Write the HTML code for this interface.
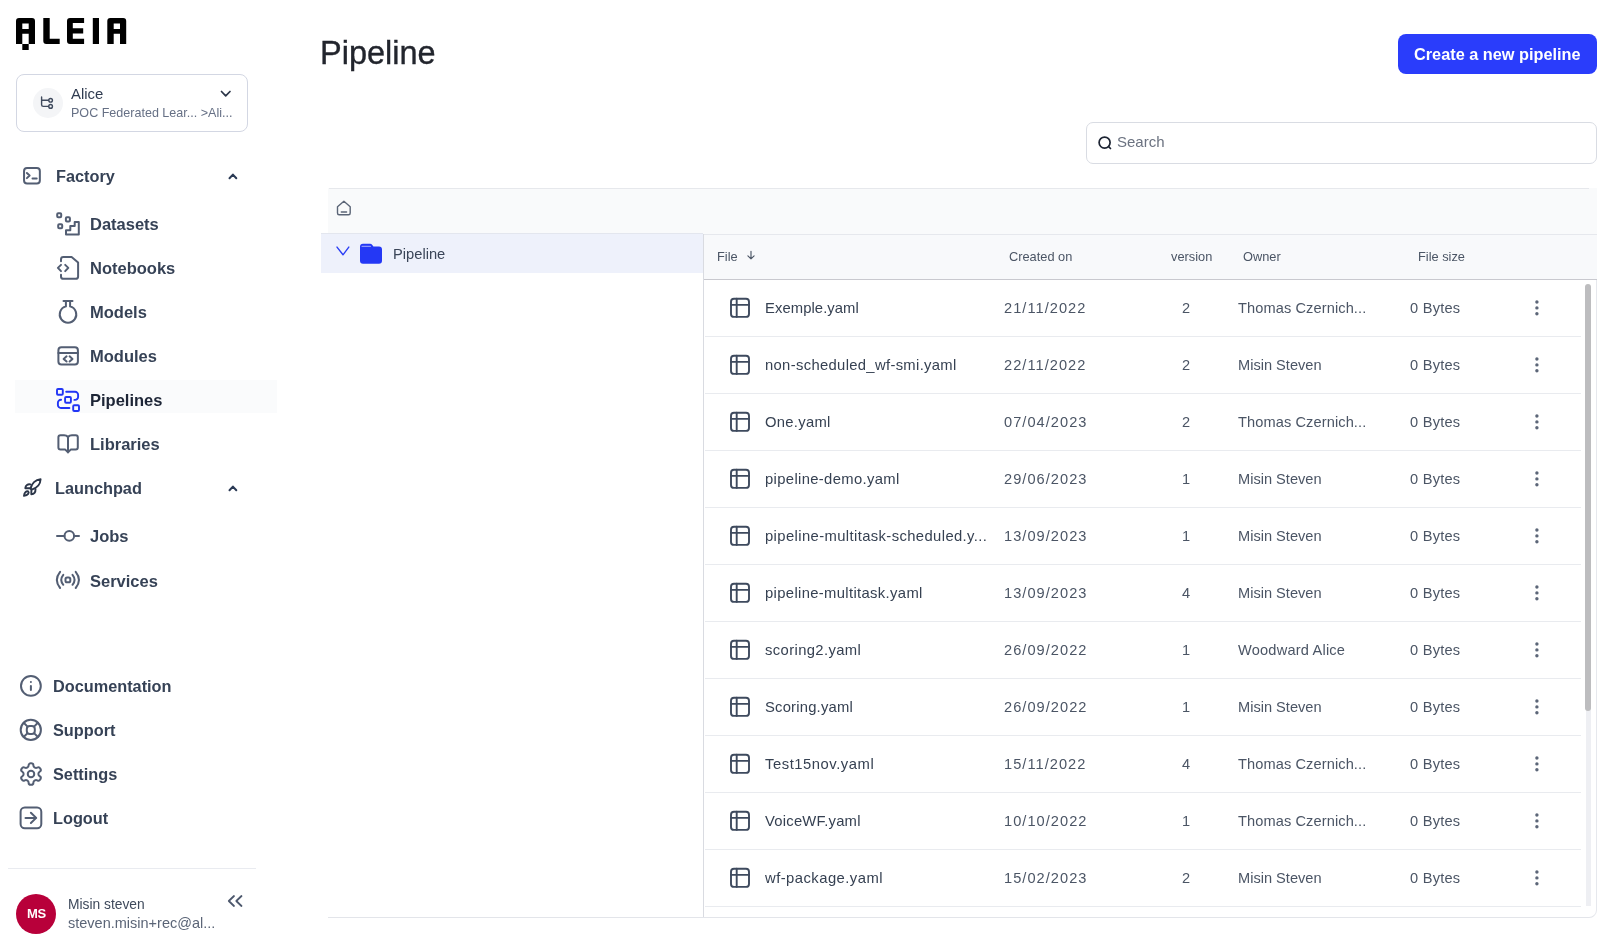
<!DOCTYPE html>
<html><head><meta charset="utf-8">
<style>
*{box-sizing:border-box;margin:0;padding:0}
html,body{width:1622px;height:945px;overflow:hidden;background:#fff;font-family:"Liberation Sans",sans-serif;color:#344054}
.a{position:absolute}
.t{position:absolute;white-space:nowrap;line-height:1;will-change:transform}
svg{position:absolute;overflow:visible}
.nav{font-weight:700;color:#364256}
.ico{fill:none;stroke:#535e73;stroke-width:2;stroke-linecap:round;stroke-linejoin:round}
.icb{fill:none;stroke:#2236f5;stroke-width:1.9;stroke-linecap:round;stroke-linejoin:round}
.hd{color:#4b5565}
.fn{color:#364152}
.dt{color:#4b5565;letter-spacing:1.05px}
.ow{color:#4b5565}
</style></head><body>
<svg style="left:16px;top:17.8px" width="112" height="33" viewBox="0 0 112 33">
<g fill="#000">
<path d="M0 3 Q0 0 3 0 L16 0 Q19 0 19 3 L19 26 L12.7 26 L12.7 15.8 L6.3 15.8 L6.3 26 L0 26 Z M6.3 5.6 L6.3 11 L12.7 11 L12.7 5.6 Z" fill-rule="evenodd"/>
<rect x="6.3" y="26" width="6.4" height="6"/>
<path d="M27.3 0 L33.7 0 L33.7 20.8 L43.7 20.8 L43.7 26 L30.3 26 Q27.3 26 27.3 23 Z"/>
<path d="M54 0 L68.1 0 L68.1 5.1 L56.8 5.1 L56.8 10.2 L67.2 10.2 L67.2 15.6 L56.8 15.6 L56.8 20.8 L68.1 20.8 L68.1 26 L54 26 Q51 26 51 23 L51 3 Q51 0 54 0 Z"/>
<rect x="76.8" y="0" width="6.2" height="26"/>
<path d="M91.3 3 Q91.3 0 94.3 0 L107.2 0 Q110.2 0 110.2 3 L110.2 26 L104 26 L104 15.8 L97.7 15.8 L97.7 26 L91.3 26 Z M97.7 5.6 L97.7 11 L104 11 L104 5.6 Z" fill-rule="evenodd"/>
</g></svg>
<div class="a" style="left:16px;top:74px;width:232px;height:58px;border:1px solid #d3d7e3;border-radius:8px"></div>
<div class="a" style="left:33px;top:88px;width:30px;height:30px;border-radius:50%;background:#f4f5f7"></div>
<svg class="ico" style="left:30px;top:86px;stroke:#404b5e;stroke-width:1.4" width="36" height="36" viewBox="0 0 36 36"><path d="M11.6 11 V18.7 Q11.6 20.4 13.3 20.4 H18.5 M11.6 14.3 H18.5"/><circle cx="20.6" cy="14.3" r="1.85"/><circle cx="20.6" cy="20.4" r="1.85"/></svg>
<div class="t fn" style="left:71px;top:87.00px;font-size:14.9px;color:#303c51">Alice</div>
<div class="t " style="left:70.8px;top:107.00px;font-size:12.55px;color:#667085">POC Federated Lear... &gt;Ali...</div>
<svg class="ico" style="left:216px;top:85px;stroke:#2b3548;stroke-width:1.7" style="left:216px;top:85px" width="20" height="20" viewBox="0 0 20 20"><path d="M5.5 6.5 L9.7 10.9 L14 6.5"/></svg>
<div class="a" style="left:15px;top:380px;width:262px;height:33px;background:#fafbfc"></div>
<svg class="ico" style="left:16px;top:160px" width="32" height="32" viewBox="0 0 32 32"><rect x="8.05" y="7.95" width="15.8" height="15.5" rx="3"/><path d="M10.9 13 L13.6 15.5 L10.9 18.1 M16.5 18.6 H20.7"/></svg>
<div class="t nav" style="left:55.5px;top:168.00px;font-size:16.3px;">Factory</div>
<svg class="ico" style="left:216px;top:160px;stroke:#2b3a55" style="left:216px;top:160px" width="32" height="32" viewBox="0 0 32 32"><path d="M13.5 18.3 L16.9 14.6 L20.3 18.3"/></svg>
<svg class="ico" style="left:52px;top:208px" width="32" height="32" viewBox="0 0 32 32"><rect x="5.2" y="5.2" width="4" height="4" rx="1"/><rect x="13.9" y="9.3" width="4" height="4.3" rx="1"/><rect x="6.2" y="16.2" width="4" height="4" rx="1"/><path d="M14 22.3 H18.3 V18 H22.7 V14 H26.8 V26.6 H14 Z"/></svg>
<div class="t nav" style="left:89.8px;top:216.00px;font-size:16.5px;">Datasets</div>
<svg class="ico" style="left:52px;top:252px" width="32" height="32" viewBox="0 0 32 32"><path d="M9 9.3 V7.5 Q9 5.1 11.4 5.1 H19.6 L26.1 10.5 V24.4 Q26.1 26.8 23.7 26.8 H11.4 Q9 26.8 9 24.4 V22.7"/><path d="M9 12.9 L5.9 15.9 L9 19.1 M13.2 12.9 L16.3 15.9 L13.2 19.1"/></svg>
<div class="t nav" style="left:89.8px;top:260.00px;font-size:16.5px;">Notebooks</div>
<svg class="ico" style="left:52px;top:296px" width="32" height="32" viewBox="0 0 32 32"><path d="M11.5 4.9 H20.5 M13.9 4.9 V10.4 A8.3 8.3 0 1 0 18.1 10.4 V4.9"/></svg>
<div class="t nav" style="left:89.8px;top:304.00px;font-size:16.5px;">Models</div>
<svg class="ico" style="left:52px;top:340px" width="32" height="32" viewBox="0 0 32 32"><rect x="6.4" y="7.3" width="19.5" height="17.3" rx="3"/><path d="M6.4 12.9 H25.9 M14.6 16.3 L11.6 18.9 L14.6 21.5 M17.6 16.3 L20.5 18.9 L17.6 21.5"/></svg>
<div class="t nav" style="left:89.8px;top:348.00px;font-size:16.5px;">Modules</div>
<svg class="icb" style="left:52px;top:384px" width="32" height="32" viewBox="0 0 32 32"><rect x="5" y="5" width="5.8" height="5.8" rx="1"/><rect x="13.1" y="13" width="5.8" height="5.8" rx="1"/><rect x="21.2" y="21.2" width="5.8" height="5.8" rx="1"/><path d="M14.2 7.8 H23 A3 3 0 0 1 26.1 10.8 V12.9 A3 3 0 0 1 23 15.9 H22.4 M9.1 15.8 H9 A3 3 0 0 0 5.9 18.8 V21 A3 3 0 0 0 9 24 H17.4"/></svg>
<div class="t nav" style="left:89.8px;top:392.00px;font-size:16.5px;color:#1d2536">Pipelines</div>
<svg class="ico" style="left:52px;top:428px" width="32" height="32" viewBox="0 0 32 32"><path d="M16 9 Q14.5 7.2 12 7.2 H8.5 Q6.4 7.2 6.4 9.3 V19.6 Q6.4 21.6 8.5 21.6 H13.3 L16 24.4 L18.7 21.6 H23.7 Q25.8 21.6 25.8 19.6 V9.3 Q25.8 7.2 23.7 7.2 H20 Q17.5 7.2 16 9 Z M16 9 V24.4"/></svg>
<div class="t nav" style="left:89.8px;top:436.00px;font-size:16.5px;">Libraries</div>
<svg class="ico" style="left:16px;top:472px;stroke:#2b3548;stroke-width:1.9" style="left:16px;top:472px" width="32" height="32" viewBox="0 0 32 32"><path d="M14.5 16.8 C15.5 11.5 19.5 7.6 24.6 7.3 C24.3 12.5 20.5 16.3 15.6 17.6 Z"/><path d="M14.3 12.4 C11.8 11.9 9.6 13.3 9.3 16.2 L13.8 16.3 M19.5 17.3 C19.6 20.3 18 22.1 15.3 22.3 L15.4 17.9 M8 23.8 C8.3 20.7 10.2 18.8 12.2 19.4 C13.4 20.6 12.3 23.3 8 23.8 Z"/></svg>
<div class="t nav" style="left:55.4px;top:480.00px;font-size:16.3px;">Launchpad</div>
<svg class="ico" style="left:216px;top:472px;stroke:#2b3a55" style="left:216px;top:472px" width="32" height="32" viewBox="0 0 32 32"><path d="M13.5 18.3 L16.9 14.6 L20.3 18.3"/></svg>
<svg class="ico" style="left:52px;top:520px" width="32" height="32" viewBox="0 0 32 32"><path d="M5 15.9 H12.5 M22.1 15.9 H27"/><circle cx="17.3" cy="15.9" r="4.8"/></svg>
<div class="t nav" style="left:89.8px;top:528.00px;font-size:16.5px;">Jobs</div>
<svg class="ico" style="left:52px;top:564px" width="32" height="32" viewBox="0 0 32 32"><rect x="13.5" y="13.5" width="4.8" height="4.8" rx="1.6"/><path d="M11.3 10.8 Q7.2 15.8 11.3 20.8 M20.5 10.8 Q24.6 15.8 20.5 20.8 M8.1 7.8 Q1.6 15.9 8.1 24 M23.7 7.8 Q30.2 15.9 23.7 24"/></svg>
<div class="t nav" style="left:89.8px;top:573.00px;font-size:16.5px;">Services</div>
<svg class="ico" style="left:14px;top:670px" width="32" height="32" viewBox="0 0 32 32"><circle cx="16.9" cy="15.9" r="9.9"/><path d="M16.9 15.9 V20 M16.9 11.9 H16.91"/></svg>
<div class="t nav" style="left:53px;top:678.00px;font-size:16.3px;">Documentation</div>
<svg class="ico" style="left:14px;top:714px" width="32" height="32" viewBox="0 0 32 32"><circle cx="16.8" cy="15.9" r="10.1"/><rect x="12.8" y="11.9" width="8" height="8" rx="3"/><path d="M9.7 8.8 L13.3 12.4 M20.3 12.4 L23.9 8.8 M20.3 19.4 L23.9 23 M13.3 19.4 L9.7 23"/></svg>
<div class="t nav" style="left:53px;top:722.00px;font-size:16.3px;">Support</div>
<svg class="ico" style="left:18.9px;top:761.9px;stroke-width:1.85" style="left:18.9px;top:761.9px" width="24" height="24" viewBox="0 0 24 24"><g transform="translate(12 12) scale(1.08) translate(-12 -12)"><path d="M12.22 2h-.44a2 2 0 0 0-2 2v.18a2 2 0 0 1-1 1.73l-.43.25a2 2 0 0 1-2 0l-.15-.08a2 2 0 0 0-2.73.73l-.22.38a2 2 0 0 0 .73 2.73l.15.1a2 2 0 0 1 1 1.72v.51a2 2 0 0 1-1 1.74l-.15.09a2 2 0 0 0-.73 2.73l.22.38a2 2 0 0 0 2.73.73l.15-.08a2 2 0 0 1 2 0l.43.25a2 2 0 0 1 1 1.73V20a2 2 0 0 0 2 2h.44a2 2 0 0 0 2-2v-.18a2 2 0 0 1 1-1.73l.43-.25a2 2 0 0 1 2 0l.15.08a2 2 0 0 0 2.73-.73l.22-.39a2 2 0 0 0-.73-2.73l-.15-.08a2 2 0 0 1-1-1.74v-.5a2 2 0 0 1 1-1.74l.15-.09a2 2 0 0 0 .73-2.73l-.22-.38a2 2 0 0 0-2.73-.73l-.15.08a2 2 0 0 1-2 0l-.43-.25a2 2 0 0 1-1-1.73V4a2 2 0 0 0-2-2z"/><circle cx="12" cy="12" r="3"/></g></svg>
<div class="t nav" style="left:53px;top:766.00px;font-size:16.3px;">Settings</div>
<svg class="ico" style="left:14px;top:802px" width="32" height="32" viewBox="0 0 32 32"><rect x="6.6" y="5.6" width="20.7" height="20.7" rx="4.2"/><path d="M11.5 15.9 H22.2 M16.9 10.8 L22.2 15.9 L16.9 21"/></svg>
<div class="t nav" style="left:53px;top:810.00px;font-size:16.3px;">Logout</div>
<div class="a" style="left:8px;top:868px;width:248px;height:1px;background:#e9ebf0"></div>
<div class="a" style="left:16px;top:894px;width:40px;height:40px;border-radius:50%;background:#b8003a"></div>
<div class="t " style="left:26.6px;top:907.00px;font-size:13px;font-weight:700;color:#fff;letter-spacing:-0.3px">MS</div>
<div class="t " style="left:68px;top:898.00px;font-size:13.8px;color:#3f4a5c">Misin steven</div>
<div class="t " style="left:68px;top:916.00px;font-size:14.5px;color:#5b6577">steven.misin+rec@al...</div>
<svg class="ico" style="left:220px;top:888px;stroke:#4d586d;stroke-width:1.8" style="left:220px;top:888px" width="28" height="28" viewBox="0 0 28 28"><path d="M14 8 L8.8 13 L14 18 M21.5 8 L16.3 13 L21.5 18"/></svg>
<div class="t " style="left:320px;top:37.00px;font-size:32.5px;color:#22252d;-webkit-text-stroke:0.35px #22252d">Pipeline</div>
<div class="a" style="left:1398px;top:34px;width:199px;height:40px;border-radius:8px;background:#2a3dfb"></div>
<div class="t " style="left:1414px;top:46.00px;font-size:16.3px;font-weight:700;color:#fff">Create a new pipeline</div>
<div class="a" style="left:1086px;top:122px;width:511px;height:42px;border:1px solid #d9dce3;border-radius:7px"></div>
<svg class="ico" style="left:1090px;top:128px;stroke:#1d2433;stroke-width:1.7" style="left:1090px;top:128px" width="28" height="28" viewBox="0 0 28 28"><circle cx="14.6" cy="14.6" r="5.5"/><path d="M18.6 18.6 L20.5 20.5"/></svg>
<div class="t " style="left:1116.5px;top:134.00px;font-size:15px;color:#6b7280">Search</div>
<div class="a" style="left:328px;top:188px;width:1269px;height:46px;background:#f9fafb"></div>
<div class="a" style="left:329px;top:188px;width:1260px;height:1px;background:#e6e8ec"></div>
<div class="a" style="left:328px;top:234px;width:1269px;height:684px;border-right:1px solid #e6e8ed;border-bottom:1px solid #e3e5ea;border-bottom-right-radius:8px"></div>
<svg class="ico" style="left:328px;top:190px;stroke:#5b6577;stroke-width:1.4" style="left:328px;top:190px" width="32" height="32" viewBox="0 0 32 32"><path d="M9.5 23 V16.8 L15.9 11.3 L22.2 16.8 V23 Q22.2 24.8 20.6 24.8 H11.1 Q9.5 24.8 9.5 23 Z M13.3 22 H18.6"/></svg>
<div class="a" style="left:321px;top:233px;width:382px;height:40px;background:#eef1fb;border-top:1px solid #e3e6ee"></div>
<svg class="ico" style="left:328px;top:230px;stroke:#2a3ef5;stroke-width:1.4" style="left:328px;top:230px" width="32" height="32" viewBox="0 0 32 32"><path d="M9 17.1 L15 24.8 L20.8 17.1"/></svg>
<svg class="ico" style="left:356px;top:240px" style="left:356px;top:240px" width="30" height="30" viewBox="0 0 30 30"><path d="M4 6.8 Q4 3.8 7 3.8 H14 Q15.4 3.8 16.3 5 L17.4 6.6 H23 Q26 6.6 26 9.6 V20.8 Q26 23.8 23 23.8 H7 Q4 23.8 4 20.8 Z" style="fill:#2438f5;stroke:none"/><path d="M6 6.3 H14.5" style="stroke:#8a96fb;stroke-width:1.2"/></svg>
<div class="t " style="left:393.3px;top:247.00px;font-size:14.7px;color:#3a4558">Pipeline</div>
<div class="a" style="left:703px;top:234px;width:1px;height:683px;background:#d9dbe1"></div>
<div class="a" style="left:704px;top:234px;width:893px;height:46px;background:#f8f9fb;border-top:1px solid #e6e8ed;border-bottom:1px solid #c9c9cf"></div>
<div class="t hd" style="left:717px;top:251.00px;font-size:12.8px;">File</div>
<svg class="ico" style="left:740px;top:244px;stroke:#4b5565;stroke-width:1.15" style="left:740px;top:244px" width="22" height="22" viewBox="0 0 22 22"><path d="M11 7.3 V14.8 M7.9 11.8 L11 14.9 L14.1 11.8"/></svg>
<div class="t hd" style="left:1009px;top:251.00px;font-size:12.8px;">Created on</div>
<div class="t hd" style="left:1171.3px;top:251.00px;font-size:12.8px;">version</div>
<div class="t hd" style="left:1243px;top:251.00px;font-size:12.8px;">Owner</div>
<div class="t hd" style="left:1417.8px;top:251.00px;font-size:12.8px;">File size</div>
<svg class="ico" style="left:720px;top:288px;stroke:#3e4a5e;stroke-width:1.9" style="left:720px;top:288px" width="40" height="40" viewBox="0 0 40 40"><rect x="11" y="10.7" width="18" height="18.2" rx="3"/><path d="M11 16.9 H29 M16.7 10.7 V28.9"/></svg>
<div class="t fn" style="left:765px;top:301.00px;font-size:14.8px;letter-spacing:0.08px">Exemple.yaml</div>
<div class="t dt" style="left:1004px;top:301.00px;font-size:14.6px;">21/11/2022</div>
<div class="t ow" style="left:1182px;top:301.00px;font-size:14.6px;">2</div>
<div class="t ow" style="left:1238.4px;top:301.00px;font-size:14.6px;letter-spacing:0.1px">Thomas Czernich...</div>
<div class="t ow" style="left:1409.6px;top:301.00px;font-size:14.6px;letter-spacing:0.25px">0 Bytes</div>
<svg style="left:1530px;top:295px" width="14" height="24" viewBox="0 0 14 24"><g fill="#5c6678"><circle cx="6.9" cy="7" r="1.7"/><circle cx="6.9" cy="12.9" r="1.7"/><circle cx="6.9" cy="18.8" r="1.7"/></g></svg>
<div class="a" style="left:705px;top:336px;width:876px;height:1px;background:#e9ebef"></div>
<svg class="ico" style="left:720px;top:345px;stroke:#3e4a5e;stroke-width:1.9" style="left:720px;top:345px" width="40" height="40" viewBox="0 0 40 40"><rect x="11" y="10.7" width="18" height="18.2" rx="3"/><path d="M11 16.9 H29 M16.7 10.7 V28.9"/></svg>
<div class="t fn" style="left:765px;top:358.00px;font-size:14.8px;letter-spacing:0.33px">non-scheduled_wf-smi.yaml</div>
<div class="t dt" style="left:1004px;top:358.00px;font-size:14.6px;">22/11/2022</div>
<div class="t ow" style="left:1182px;top:358.00px;font-size:14.6px;">2</div>
<div class="t ow" style="left:1238.4px;top:358.00px;font-size:14.6px;letter-spacing:0.0px">Misin Steven</div>
<div class="t ow" style="left:1409.6px;top:358.00px;font-size:14.6px;letter-spacing:0.25px">0 Bytes</div>
<svg style="left:1530px;top:352px" width="14" height="24" viewBox="0 0 14 24"><g fill="#5c6678"><circle cx="6.9" cy="7" r="1.7"/><circle cx="6.9" cy="12.9" r="1.7"/><circle cx="6.9" cy="18.8" r="1.7"/></g></svg>
<div class="a" style="left:705px;top:393px;width:876px;height:1px;background:#e9ebef"></div>
<svg class="ico" style="left:720px;top:402px;stroke:#3e4a5e;stroke-width:1.9" style="left:720px;top:402px" width="40" height="40" viewBox="0 0 40 40"><rect x="11" y="10.7" width="18" height="18.2" rx="3"/><path d="M11 16.9 H29 M16.7 10.7 V28.9"/></svg>
<div class="t fn" style="left:765px;top:415.00px;font-size:14.8px;letter-spacing:0.28px">One.yaml</div>
<div class="t dt" style="left:1004px;top:415.00px;font-size:14.6px;">07/04/2023</div>
<div class="t ow" style="left:1182px;top:415.00px;font-size:14.6px;">2</div>
<div class="t ow" style="left:1238.4px;top:415.00px;font-size:14.6px;letter-spacing:0.1px">Thomas Czernich...</div>
<div class="t ow" style="left:1409.6px;top:415.00px;font-size:14.6px;letter-spacing:0.25px">0 Bytes</div>
<svg style="left:1530px;top:409px" width="14" height="24" viewBox="0 0 14 24"><g fill="#5c6678"><circle cx="6.9" cy="7" r="1.7"/><circle cx="6.9" cy="12.9" r="1.7"/><circle cx="6.9" cy="18.8" r="1.7"/></g></svg>
<div class="a" style="left:705px;top:450px;width:876px;height:1px;background:#e9ebef"></div>
<svg class="ico" style="left:720px;top:459px;stroke:#3e4a5e;stroke-width:1.9" style="left:720px;top:459px" width="40" height="40" viewBox="0 0 40 40"><rect x="11" y="10.7" width="18" height="18.2" rx="3"/><path d="M11 16.9 H29 M16.7 10.7 V28.9"/></svg>
<div class="t fn" style="left:765px;top:472.00px;font-size:14.8px;letter-spacing:0.35px">pipeline-demo.yaml</div>
<div class="t dt" style="left:1004px;top:472.00px;font-size:14.6px;">29/06/2023</div>
<div class="t ow" style="left:1182px;top:472.00px;font-size:14.6px;">1</div>
<div class="t ow" style="left:1238.4px;top:472.00px;font-size:14.6px;letter-spacing:0.0px">Misin Steven</div>
<div class="t ow" style="left:1409.6px;top:472.00px;font-size:14.6px;letter-spacing:0.25px">0 Bytes</div>
<svg style="left:1530px;top:466px" width="14" height="24" viewBox="0 0 14 24"><g fill="#5c6678"><circle cx="6.9" cy="7" r="1.7"/><circle cx="6.9" cy="12.9" r="1.7"/><circle cx="6.9" cy="18.8" r="1.7"/></g></svg>
<div class="a" style="left:705px;top:507px;width:876px;height:1px;background:#e9ebef"></div>
<svg class="ico" style="left:720px;top:516px;stroke:#3e4a5e;stroke-width:1.9" style="left:720px;top:516px" width="40" height="40" viewBox="0 0 40 40"><rect x="11" y="10.7" width="18" height="18.2" rx="3"/><path d="M11 16.9 H29 M16.7 10.7 V28.9"/></svg>
<div class="t fn" style="left:765px;top:529.00px;font-size:14.8px;letter-spacing:0.39px">pipeline-multitask-scheduled.y...</div>
<div class="t dt" style="left:1004px;top:529.00px;font-size:14.6px;">13/09/2023</div>
<div class="t ow" style="left:1182px;top:529.00px;font-size:14.6px;">1</div>
<div class="t ow" style="left:1238.4px;top:529.00px;font-size:14.6px;letter-spacing:0.0px">Misin Steven</div>
<div class="t ow" style="left:1409.6px;top:529.00px;font-size:14.6px;letter-spacing:0.25px">0 Bytes</div>
<svg style="left:1530px;top:523px" width="14" height="24" viewBox="0 0 14 24"><g fill="#5c6678"><circle cx="6.9" cy="7" r="1.7"/><circle cx="6.9" cy="12.9" r="1.7"/><circle cx="6.9" cy="18.8" r="1.7"/></g></svg>
<div class="a" style="left:705px;top:564px;width:876px;height:1px;background:#e9ebef"></div>
<svg class="ico" style="left:720px;top:573px;stroke:#3e4a5e;stroke-width:1.9" style="left:720px;top:573px" width="40" height="40" viewBox="0 0 40 40"><rect x="11" y="10.7" width="18" height="18.2" rx="3"/><path d="M11 16.9 H29 M16.7 10.7 V28.9"/></svg>
<div class="t fn" style="left:765px;top:586.00px;font-size:14.8px;letter-spacing:0.35px">pipeline-multitask.yaml</div>
<div class="t dt" style="left:1004px;top:586.00px;font-size:14.6px;">13/09/2023</div>
<div class="t ow" style="left:1182px;top:586.00px;font-size:14.6px;">4</div>
<div class="t ow" style="left:1238.4px;top:586.00px;font-size:14.6px;letter-spacing:0.0px">Misin Steven</div>
<div class="t ow" style="left:1409.6px;top:586.00px;font-size:14.6px;letter-spacing:0.25px">0 Bytes</div>
<svg style="left:1530px;top:580px" width="14" height="24" viewBox="0 0 14 24"><g fill="#5c6678"><circle cx="6.9" cy="7" r="1.7"/><circle cx="6.9" cy="12.9" r="1.7"/><circle cx="6.9" cy="18.8" r="1.7"/></g></svg>
<div class="a" style="left:705px;top:621px;width:876px;height:1px;background:#e9ebef"></div>
<svg class="ico" style="left:720px;top:630px;stroke:#3e4a5e;stroke-width:1.9" style="left:720px;top:630px" width="40" height="40" viewBox="0 0 40 40"><rect x="11" y="10.7" width="18" height="18.2" rx="3"/><path d="M11 16.9 H29 M16.7 10.7 V28.9"/></svg>
<div class="t fn" style="left:765px;top:643.00px;font-size:14.8px;letter-spacing:0.38px">scoring2.yaml</div>
<div class="t dt" style="left:1004px;top:643.00px;font-size:14.6px;">26/09/2022</div>
<div class="t ow" style="left:1182px;top:643.00px;font-size:14.6px;">1</div>
<div class="t ow" style="left:1238.4px;top:643.00px;font-size:14.6px;letter-spacing:0.2px">Woodward Alice</div>
<div class="t ow" style="left:1409.6px;top:643.00px;font-size:14.6px;letter-spacing:0.25px">0 Bytes</div>
<svg style="left:1530px;top:637px" width="14" height="24" viewBox="0 0 14 24"><g fill="#5c6678"><circle cx="6.9" cy="7" r="1.7"/><circle cx="6.9" cy="12.9" r="1.7"/><circle cx="6.9" cy="18.8" r="1.7"/></g></svg>
<div class="a" style="left:705px;top:678px;width:876px;height:1px;background:#e9ebef"></div>
<svg class="ico" style="left:720px;top:687px;stroke:#3e4a5e;stroke-width:1.9" style="left:720px;top:687px" width="40" height="40" viewBox="0 0 40 40"><rect x="11" y="10.7" width="18" height="18.2" rx="3"/><path d="M11 16.9 H29 M16.7 10.7 V28.9"/></svg>
<div class="t fn" style="left:765px;top:700.00px;font-size:14.8px;letter-spacing:0.2px">Scoring.yaml</div>
<div class="t dt" style="left:1004px;top:700.00px;font-size:14.6px;">26/09/2022</div>
<div class="t ow" style="left:1182px;top:700.00px;font-size:14.6px;">1</div>
<div class="t ow" style="left:1238.4px;top:700.00px;font-size:14.6px;letter-spacing:0.0px">Misin Steven</div>
<div class="t ow" style="left:1409.6px;top:700.00px;font-size:14.6px;letter-spacing:0.25px">0 Bytes</div>
<svg style="left:1530px;top:694px" width="14" height="24" viewBox="0 0 14 24"><g fill="#5c6678"><circle cx="6.9" cy="7" r="1.7"/><circle cx="6.9" cy="12.9" r="1.7"/><circle cx="6.9" cy="18.8" r="1.7"/></g></svg>
<div class="a" style="left:705px;top:735px;width:876px;height:1px;background:#e9ebef"></div>
<svg class="ico" style="left:720px;top:744px;stroke:#3e4a5e;stroke-width:1.9" style="left:720px;top:744px" width="40" height="40" viewBox="0 0 40 40"><rect x="11" y="10.7" width="18" height="18.2" rx="3"/><path d="M11 16.9 H29 M16.7 10.7 V28.9"/></svg>
<div class="t fn" style="left:765px;top:757.00px;font-size:14.8px;letter-spacing:0.54px">Test15nov.yaml</div>
<div class="t dt" style="left:1004px;top:757.00px;font-size:14.6px;">15/11/2022</div>
<div class="t ow" style="left:1182px;top:757.00px;font-size:14.6px;">4</div>
<div class="t ow" style="left:1238.4px;top:757.00px;font-size:14.6px;letter-spacing:0.1px">Thomas Czernich...</div>
<div class="t ow" style="left:1409.6px;top:757.00px;font-size:14.6px;letter-spacing:0.25px">0 Bytes</div>
<svg style="left:1530px;top:751px" width="14" height="24" viewBox="0 0 14 24"><g fill="#5c6678"><circle cx="6.9" cy="7" r="1.7"/><circle cx="6.9" cy="12.9" r="1.7"/><circle cx="6.9" cy="18.8" r="1.7"/></g></svg>
<div class="a" style="left:705px;top:792px;width:876px;height:1px;background:#e9ebef"></div>
<svg class="ico" style="left:720px;top:801px;stroke:#3e4a5e;stroke-width:1.9" style="left:720px;top:801px" width="40" height="40" viewBox="0 0 40 40"><rect x="11" y="10.7" width="18" height="18.2" rx="3"/><path d="M11 16.9 H29 M16.7 10.7 V28.9"/></svg>
<div class="t fn" style="left:765px;top:814.00px;font-size:14.8px;letter-spacing:0.23px">VoiceWF.yaml</div>
<div class="t dt" style="left:1004px;top:814.00px;font-size:14.6px;">10/10/2022</div>
<div class="t ow" style="left:1182px;top:814.00px;font-size:14.6px;">1</div>
<div class="t ow" style="left:1238.4px;top:814.00px;font-size:14.6px;letter-spacing:0.1px">Thomas Czernich...</div>
<div class="t ow" style="left:1409.6px;top:814.00px;font-size:14.6px;letter-spacing:0.25px">0 Bytes</div>
<svg style="left:1530px;top:808px" width="14" height="24" viewBox="0 0 14 24"><g fill="#5c6678"><circle cx="6.9" cy="7" r="1.7"/><circle cx="6.9" cy="12.9" r="1.7"/><circle cx="6.9" cy="18.8" r="1.7"/></g></svg>
<div class="a" style="left:705px;top:849px;width:876px;height:1px;background:#e9ebef"></div>
<svg class="ico" style="left:720px;top:858px;stroke:#3e4a5e;stroke-width:1.9" style="left:720px;top:858px" width="40" height="40" viewBox="0 0 40 40"><rect x="11" y="10.7" width="18" height="18.2" rx="3"/><path d="M11 16.9 H29 M16.7 10.7 V28.9"/></svg>
<div class="t fn" style="left:765px;top:871.00px;font-size:14.8px;letter-spacing:0.46px">wf-package.yaml</div>
<div class="t dt" style="left:1004px;top:871.00px;font-size:14.6px;">15/02/2023</div>
<div class="t ow" style="left:1182px;top:871.00px;font-size:14.6px;">2</div>
<div class="t ow" style="left:1238.4px;top:871.00px;font-size:14.6px;letter-spacing:0.0px">Misin Steven</div>
<div class="t ow" style="left:1409.6px;top:871.00px;font-size:14.6px;letter-spacing:0.25px">0 Bytes</div>
<svg style="left:1530px;top:865px" width="14" height="24" viewBox="0 0 14 24"><g fill="#5c6678"><circle cx="6.9" cy="7" r="1.7"/><circle cx="6.9" cy="12.9" r="1.7"/><circle cx="6.9" cy="18.8" r="1.7"/></g></svg>
<div class="a" style="left:705px;top:906px;width:876px;height:1px;background:#e9ebef"></div>
<div class="a" style="left:1586px;top:700px;width:5px;height:206px;background:#eeeff3"></div>
<div class="a" style="left:1585px;top:284px;width:6px;height:427px;border-radius:3px;background:#bdbdbf"></div>
</body></html>
